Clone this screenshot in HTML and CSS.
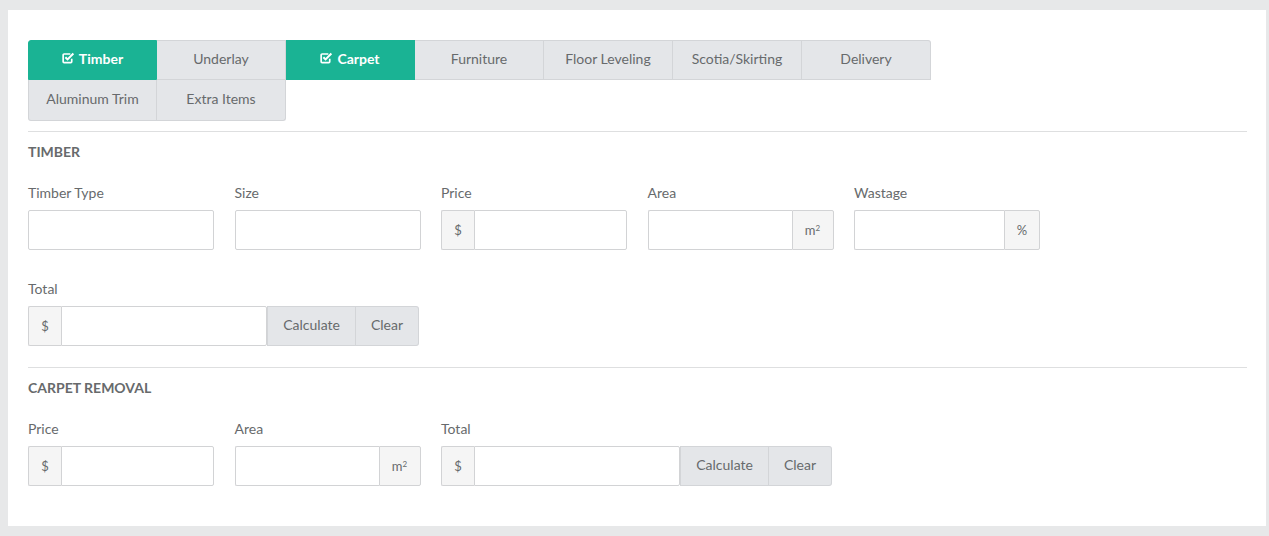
FILE: index.html
```html
<!DOCTYPE html>
<html>
<head>
<meta charset="utf-8">
<link rel="stylesheet" href="styles.css">
</head>
<body>
<div class="page">
  <div class="panel">
    <div class="tabs">
      <button class="tab active"><svg class="chk" viewBox="0 0 14 13" width="13" height="12"><path d="M10.5 7.2V10.5a1 1 0 0 1-1 1H2.2a1 1 0 0 1-1-1V3.2a1 1 0 0 1 1-1H9" fill="none" stroke="#fff" stroke-width="1.8"/><path d="M3.6 5.6l2.4 2.4 6.3-6.3" fill="none" stroke="#fff" stroke-width="2.2"/></svg>Timber</button>
      <button class="tab">Underlay</button>
      <button class="tab active"><svg class="chk" viewBox="0 0 14 13" width="13" height="12"><path d="M10.5 7.2V10.5a1 1 0 0 1-1 1H2.2a1 1 0 0 1-1-1V3.2a1 1 0 0 1 1-1H9" fill="none" stroke="#fff" stroke-width="1.8"/><path d="M3.6 5.6l2.4 2.4 6.3-6.3" fill="none" stroke="#fff" stroke-width="2.2"/></svg>Carpet</button>
      <button class="tab">Furniture</button>
      <button class="tab">Floor Leveling</button>
      <button class="tab">Scotia/Skirting</button>
      <button class="tab tr">Delivery</button>
      <button class="tab bl">Aluminum Trim</button>
      <button class="tab br">Extra Items</button>
    </div>

    <hr class="sep">
    <h5 class="section-title">TIMBER</h5>
    <div class="fields">
      <div class="field">
        <label>Timber Type</label>
        <input class="control" type="text">
      </div>
      <div class="field">
        <label>Size</label>
        <input class="control" type="text">
      </div>
      <div class="field">
        <label>Price</label>
        <div class="group"><span class="addon pre">$</span><input class="control" type="text"></div>
      </div>
      <div class="field">
        <label>Area</label>
        <div class="group"><input class="control" type="text"><span class="addon post m2">m<sup>2</sup></span></div>
      </div>
      <div class="field">
        <label>Wastage</label>
        <div class="group"><input class="control" type="text"><span class="addon post pct">%</span></div>
      </div>
    </div>
    <div class="fields total-row">
      <div class="field wide">
        <label>Total</label>
        <div class="group"><span class="addon pre">$</span><input class="control" type="text"><button class="btn">Calculate</button><button class="btn last">Clear</button></div>
      </div>
    </div>

    <hr class="sep sep2">
    <h5 class="section-title">CARPET REMOVAL</h5>
    <div class="fields">
      <div class="field">
        <label>Price</label>
        <div class="group"><span class="addon pre">$</span><input class="control" type="text"></div>
      </div>
      <div class="field">
        <label>Area</label>
        <div class="group"><input class="control" type="text"><span class="addon post m2">m<sup>2</sup></span></div>
      </div>
      <div class="field wide">
        <label>Total</label>
        <div class="group"><span class="addon pre">$</span><input class="control" type="text"><button class="btn">Calculate</button><button class="btn last">Clear</button></div>
      </div>
    </div>
  </div>
</div>
</body>
</html>
```

FILE: styles.css
```css
* { box-sizing: border-box; }

html, body {
  margin: 0;
  background: #e7e8e9;
}

body {
  font-family: Lato, "Open Sans", "Liberation Sans", sans-serif;
  font-size: 14px;
  color: #676a6c;
}

.page {
  padding: 10px 3px 10px 8px;
}

.panel {
  background: #ffffff;
  padding: 30px 19px 40px 20px;
  height: 516px;
}

.tabs {
  display: flex;
  flex-wrap: wrap;
  width: 903px;
}

.tab {
  width: 129px;
  height: 40px;
  margin: 0;
  padding: 0 0 3px 0;
  font-family: inherit;
  font-size: 14px;
  color: #676a6c;
  background: #e4e6e9;
  border: 1px solid #d3d5d8;
  border-left-width: 0;
  border-top-width: 1px;
  display: flex;
  align-items: center;
  justify-content: center;
  gap: 4px;
}

.tab:first-child { border-left-width: 1px; border-top-left-radius: 3px; }
.tab.bl { border-left-width: 1px; border-top-width: 0; height: 41px; border-bottom-left-radius: 3px; }
.tab.br { border-top-width: 0; height: 41px; border-bottom-right-radius: 3px; }
.tab.tr { border-top-right-radius: 3px; }

.tab.active {
  background: #1ab394;
  border-color: #1ab394;
  color: #ffffff;
  font-weight: 700;
}

.chk { display: block; margin-top: -1px; }

.sep {
  border: 0;
  border-top: 1px solid #dedfe0;
  margin: 10px 0 0 0;
  height: 0;
}

.sep2 { margin-top: 21px; }

.section-title {
  margin: 11px 0 0 0;
  font-size: 14px;
  line-height: 18px;
  font-weight: 700;
  color: #676a6c;
}

.fields {
  display: grid;
  grid-template-columns: repeat(5, 186px);
  column-gap: 20.5px;
  margin-top: 23px;
}

.total-row { margin-top: 30px; }

.field label {
  display: block;
  line-height: 18px;
  margin-bottom: 8px;
}

.field.wide { grid-column: span 2; }
.field.wide .group { width: 391px; }

.control {
  display: block;
  width: 100%;
  height: 40px;
  margin: 0;
  border: 1px solid #d2d3d5;
  border-radius: 2px;
  background: #fff;
  font-family: inherit;
  font-size: 14px;
  padding: 6px 12px;
  outline: none;
}

.group {
  display: flex;
  height: 40px;
}

.group .control {
  flex: 1 1 auto;
  width: auto;
  min-width: 0;
}

.addon {
  flex: none;
  display: flex;
  align-items: center;
  justify-content: center;
  background: #f5f5f5;
  border: 1px solid #d2d3d5;
  color: #676a6c;
  font-size: 13px;
}

.addon.pre {
  width: 33px;
  border-right: 0;
  border-radius: 2px 0 0 2px;
}

.group .addon.pre + .control { border-radius: 0 2px 2px 0; }

.addon.post {
  border-left: 1px solid #d2d3d5;
  border-radius: 0 2px 2px 0;
}

.group .control:first-child { border-radius: 2px 0 0 2px; border-right: 0; }

.addon.m2 { width: 42px; }
.addon.pct { width: 36px; }

.addon sup {
  font-size: 8px;
  line-height: 0;
  position: relative;
  top: -2px;
  vertical-align: super;
}

.btn {
  flex: none;
  height: 40px;
  margin: 0;
  padding: 0 15px 3px 15px;
  font-family: inherit;
  font-size: 14px;
  color: #676a6c;
  background: #e4e6e9;
  border: 1px solid #d3d5d8;
  border-left-width: 0;
}

.group .pre + .control + .btn { border-left-width: 1px; }
.group .control + .btn { border-radius: 0; }

.btn.last { border-radius: 0 3px 3px 0; }
```
